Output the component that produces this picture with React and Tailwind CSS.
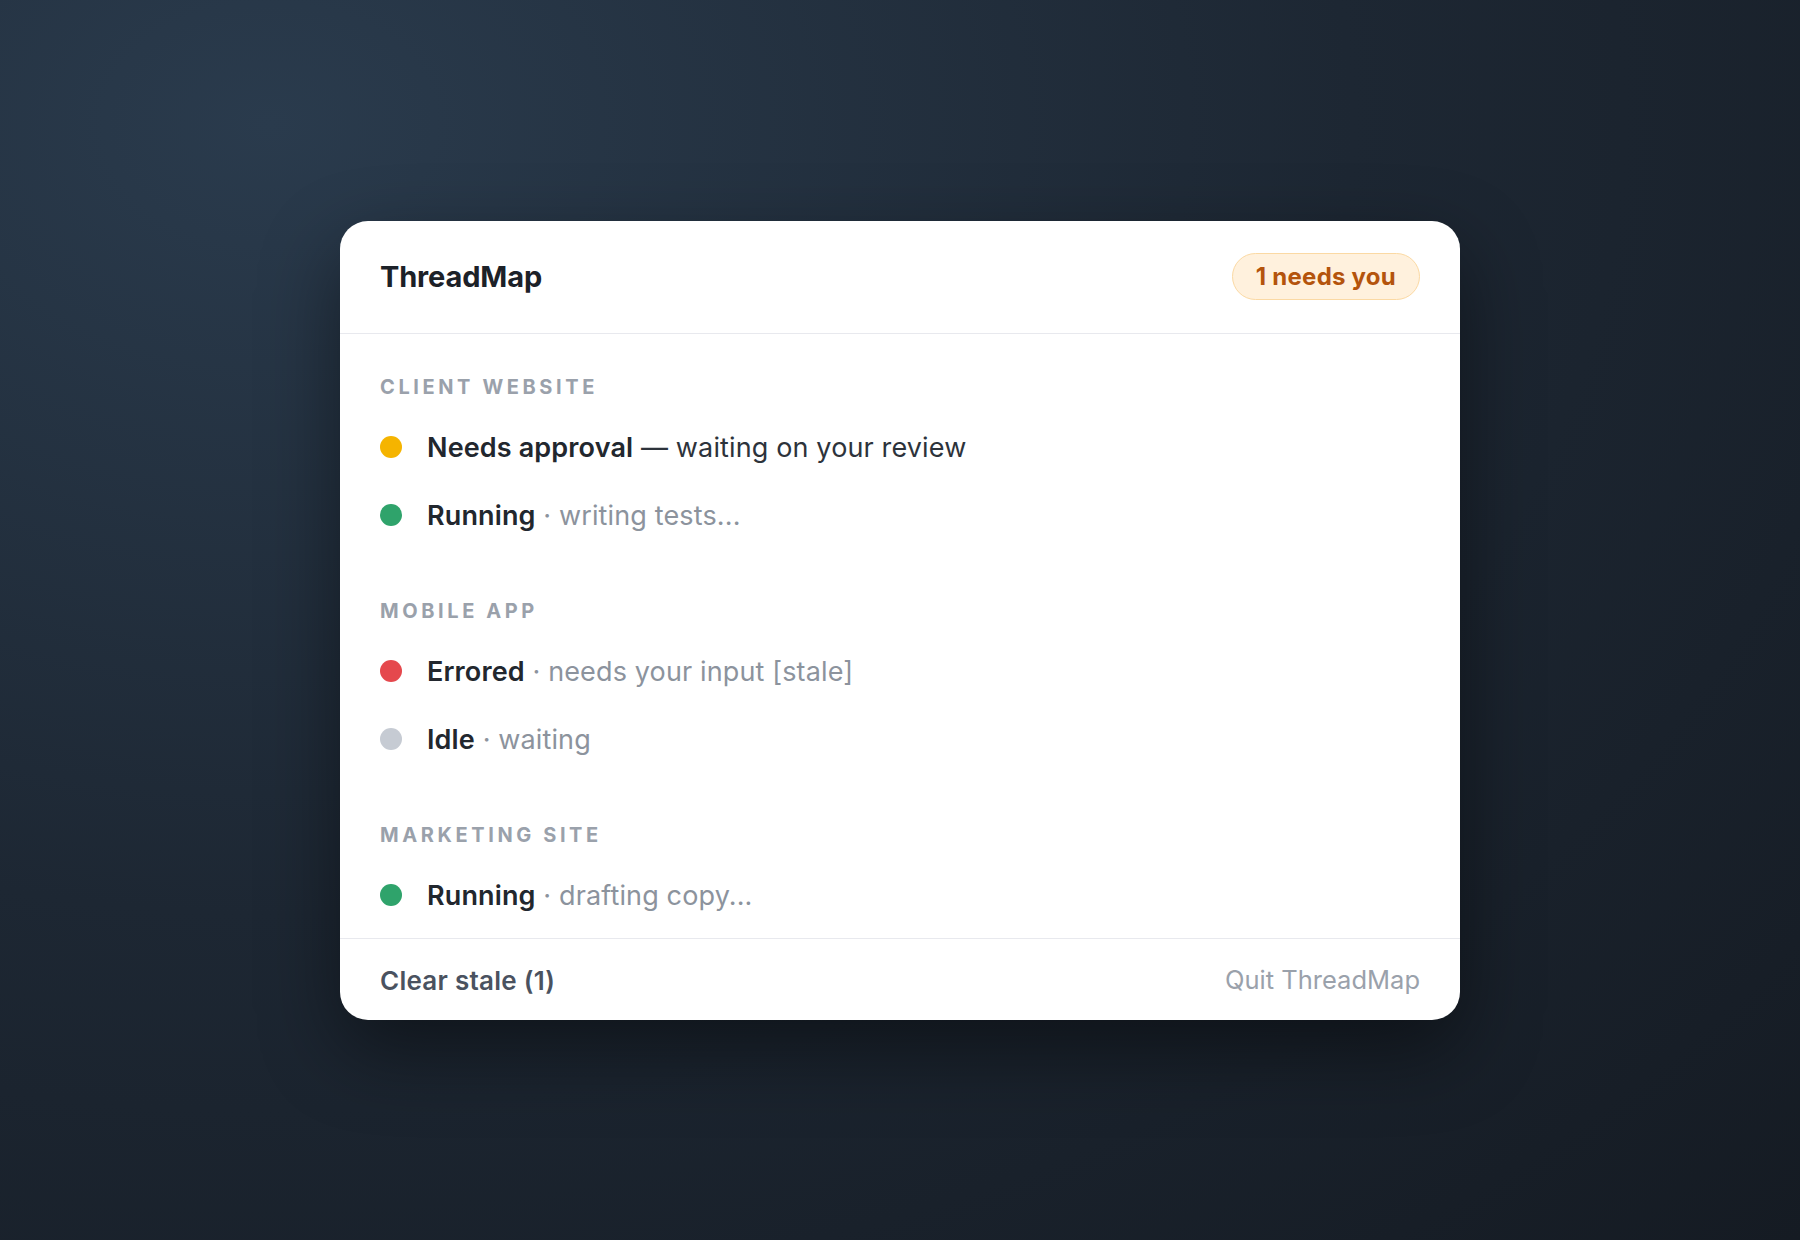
import React from "react";

const sections = [
  {
    name: "Client website",
    rows: [
      { color: "bg-[#f5b400]", label: "Needs approval", sep: " — ", detail: "waiting on your review", dark: true },
      { color: "bg-[#2fa36b]", label: "Running", sep: " · ", detail: "writing tests..." },
    ],
  },
  {
    name: "Mobile app",
    rows: [
      { color: "bg-[#e5484d]", label: "Errored", sep: " · ", detail: "needs your input [stale]" },
      { color: "bg-[#c6cbd3]", label: "Idle", sep: " · ", detail: "waiting" },
    ],
  },
  {
    name: "Marketing site",
    rows: [{ color: "bg-[#2fa36b]", label: "Running", sep: " · ", detail: "drafting copy..." }],
  },
];

export default function App() {
  return (
    <div
      className="flex h-[1240px] w-full items-center justify-center bg-[radial-gradient(ellipse_at_15%_10%,#2a3b4d_0%,#1d2733_50%,#151b23_100%)]"
      style={{ fontFamily: "Inter, 'Noto Sans', sans-serif" }}
    >
      <div className="w-[1120px] overflow-hidden rounded-[28px] bg-white shadow-[0_30px_80px_rgba(0,0,0,0.45)]">
        {/* Header */}
        <div className="flex h-[113px] items-center justify-between border-b border-[#e8e9ee] px-10">
          <h1 className="text-[29px] font-bold tracking-[-0.005em] text-[#1c2128]">ThreadMap</h1>
          <span className="flex h-[47px] items-center rounded-full border-[1.5px] border-[#fbd9a3] bg-[#fff1dd] px-[23px] text-[24px] font-bold tracking-[0.01em] text-[#b4540c]">
            1 needs you
          </span>
        </div>

        {/* Sections */}
        <div className="flex flex-col gap-[50px] px-10 pb-[9px] pt-[41px]">
          {sections.map((section) => (
            <div key={section.name}>
              <div className="mb-[14px] flex h-6 items-center text-[20px] font-bold uppercase tracking-[0.18em] text-[#9aa1ab]">
                {section.name}
              </div>
              {section.rows.map((row, i) => (
                <div key={i} className="flex h-[68px] items-center gap-[25px] text-[27px]">
                  <span className={`h-[22px] w-[22px] shrink-0 rounded-full ${row.color}`} />
                  <p className="mt-[3px] whitespace-nowrap tracking-[0.005em]">
                    <span className="font-semibold text-[#22272e]">{row.label}</span>
                    <span className={row.dark ? "text-[#2d333b]" : "text-[#8c939d]"}>
                      {row.sep}
                      {row.detail}
                    </span>
                  </p>
                </div>
              ))}
            </div>
          ))}
        </div>

        {/* Footer */}
        <div className="flex h-[82px] items-center justify-between border-t border-[#e8e9ee] px-10 pt-[2px]">
          <button className="text-[26px] font-semibold tracking-[0.01em] text-[#4a5260]">Clear stale (1)</button>
          <button className="text-[25.5px] text-[#9aa1ab]">Quit ThreadMap</button>
        </div>
      </div>
    </div>
  );
}
